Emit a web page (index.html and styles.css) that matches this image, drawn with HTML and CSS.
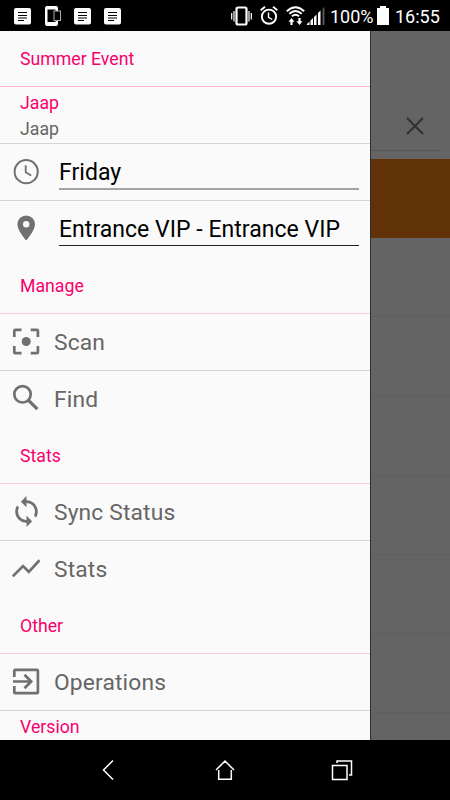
FILE: index.html
```html
<!DOCTYPE html>
<html lang="en">
<head>
    <meta charset="UTF-8">
    <meta name="viewport" content="width=device-width, initial-scale=1.0">
    <title>Summer Event</title>
    <link rel="stylesheet" href="styles.css">
</head>
<body>
    <!-- status bar -->
    <header class="statusbar">
        <div class="notifications">
            <svg class="note" viewBox="0 0 17 17"><rect width="17" height="16.500" rx="2" fill="#fff"/><path d="M4 4.500h9M4 7.500h9M4 10h9M4 12.500h6" stroke="#000" stroke-width="1.200"/></svg>
            <svg class="device" viewBox="0 0 17 20"><path d="M2 0h9a2 2 0 0 1 2 2v3H10.500V3.500H2.500V16h8V14.500H13V18a2 2 0 0 1-2 2H2a2 2 0 0 1-2-2V2a2 2 0 0 1 2-2z" fill="#fff"/><rect x="9" y="5" width="6.500" height="9.500" fill="#000" stroke="#aaa"/></svg>
            <svg class="note" viewBox="0 0 17 17"><rect width="17" height="16.500" rx="2" fill="#fff"/><path d="M4 4.500h9M4 7.500h9M4 10h9M4 12.500h6" stroke="#000" stroke-width="1.200"/></svg>
            <svg class="note" viewBox="0 0 17 17"><rect width="17" height="16.500" rx="2" fill="#fff"/><path d="M4 4.500h9M4 7.500h9M4 10h9M4 12.500h6" stroke="#000" stroke-width="1.200"/></svg>
        </div>
        <div class="system">
            <svg class="vibrate" viewBox="0 0 21 20" fill="none" stroke="#fff"><rect x="5.500" y="1.500" width="10" height="17" rx="1.500" stroke-width="2.200"/><path d="M.7 7v6.500M3 5v10.500M18 5v10.500M20.300 7v6.500" stroke-width="1.200"/></svg>
            <svg class="alarm" viewBox="0 0 18 19" fill="none" stroke="#fff"><circle cx="9" cy="10.700" r="7.100" stroke-width="1.900"/><path d="M.7 4.200L5 .8M17.300 4.200L13 .8" stroke-width="1.900"/><path d="M8.500 6.500v4.800l3.700 2.200" stroke-width="1.400"/></svg>
            <svg class="wifi" viewBox="0 0 19 20" fill="none" stroke="#fff"><path d="M.8 5.200q8.700-8 17.400 0M3.300 7.800q6.200-5.600 12.400 0M6 10.300q3.500-3.200 7 0" stroke-width="1.900"/><path d="M2.500 15.800L5.500 12l3 3.800H6.600V19H4.400v-3.200zM10.500 15.200l3 3.800 3-3.800h-1.900V12h-2.200v3.200z" fill="#fff" stroke="none"/></svg>
            <svg class="signal" viewBox="0 0 18 19"><path d="M0 19v-1l2.500-2.500V19zM3.500 19v-4.500L6 12v7zM7 19v-8l2.500-2.500V19zM11 19V7l2.500-2.500V19z" fill="#fff"/><path d="M15.500 19V3L17.500 1v18z" fill="#555"/></svg>
            <span class="percent">100%</span>
            <svg class="battery" viewBox="0 0 12 19"><path d="M3 0h6v2h3v17H0V2h3z" fill="#fff"/></svg>
            <span class="clock">16:55</span>
        </div>
    </header>

    <main class="screen">
        <!-- drawer -->
        <nav class="drawer">
            <h1 class="title">Summer Event</h1>
            <div class="user">
                <div class="user-name">Jaap</div>
                <div class="user-sub">Jaap</div>
            </div>
            <div class="row">
                <svg class="icon" viewBox="0 0 28 28"><circle cx="14.200" cy="13.700" r="11.600" fill="none" stroke="#707070" stroke-width="2"/><path d="M13.700 7.200v7l5.500 3.400" fill="none" stroke="#707070" stroke-width="1.800"/></svg>
                <div class="field">Friday</div>
            </div>
            <div class="row last">
                <svg class="icon" viewBox="0 0 28 28"><path d="M14.200 1.500A8.800 8.800 0 0 0 5.400 10.300c0 6.500 8.800 16.300 8.800 16.300S23 16.800 23 10.300A8.800 8.800 0 0 0 14.200 1.500zm0 12a3.200 3.200 0 1 1 0-6.400 3.200 3.200 0 0 1 0 6.400z"/></svg>
                <div class="field dark">Entrance VIP - Entrance VIP</div>
            </div>

            <h2 class="group">Manage</h2>
            <div class="row">
                <svg class="icon" viewBox="0 0 28 28"><circle cx="14.200" cy="13.500" r="4.500"/><path d="M2.300 9V2.800a1 1 0 0 1 1-1h6.200M18.700 1.800h6.200a1 1 0 0 1 1 1V9M25.900 18v6.200a1 1 0 0 1-1 1h-6.200M9.500 25.200H3.300a1 1 0 0 1-1-1V18" fill="none" stroke="#707070" stroke-width="2.700"/></svg>
                <span class="label">Scan</span>
            </div>
            <div class="row last">
                <svg class="icon" viewBox="0 0 28 28"><g fill="none" stroke="#707070"><circle cx="10.500" cy="10.300" r="8.200" stroke-width="2.700"/><path d="M16.500 16.300l8.900 8.900" stroke-width="3.200"/></g></svg>
                <span class="label">Find</span>
            </div>

            <h2 class="group">Stats</h2>
            <div class="row">
                <svg class="icon sync" viewBox="1 1 22 22"><path d="M12 4V1L8 5l4 4V6c3.310 0 6 2.690 6 6 0 1.010-.25 1.970-.7 2.800l1.460 1.460C19.540 15.030 20 13.570 20 12c0-4.420-3.580-8-8-8zm0 14c-3.310 0-6-2.690-6-6 0-1.010.25-1.970.7-2.800L5.240 7.740C4.460 8.970 4 10.430 4 12c0 4.420 3.580 8 8 8v3l4-4-4-4v3z"/></svg>
                <span class="label">Sync Status</span>
            </div>
            <div class="row last">
                <svg class="icon" viewBox="0 0 28 28"><path d="M.8 22.300L11 12.100l5.800 5.700L27.500 6.200" fill="none" stroke="#707070" stroke-width="2.700"/></svg>
                <span class="label">Stats</span>
            </div>

            <h2 class="group">Other</h2>
            <div class="row">
                <svg class="icon" viewBox="0 0 28 28"><path d="M2.300 9V2.800a1 1 0 0 1 1-1h21.600a1 1 0 0 1 1 1v21.400a1 1 0 0 1-1 1H3.300a1 1 0 0 1-1-1V18M1 13.500h18M12.500 6.800l6.700 6.700-6.700 6.700" fill="none" stroke="#707070" stroke-width="2.700"/></svg>
                <span class="label">Operations</span>
            </div>
            <div class="version">Version</div>
        </nav>

        <!-- dimmed page behind the drawer -->
        <section class="page">
            <div class="search">
                <svg class="close" viewBox="0 0 18 18"><path d="M1 1l16 16M17 1L1 17" stroke="#333" stroke-width="2.200"/></svg>
            </div>
            <div class="banner"></div>
            <div class="item"></div>
            <div class="item"></div>
            <div class="item"></div>
            <div class="item"></div>
            <div class="item"></div>
            <div class="item"></div>
        </section>
    </main>

    <!-- android buttons -->
    <footer class="navbar">
        <svg class="nav-icon" viewBox="0 0 22 22"><path d="M16 1.500L6.500 11l9.500 9.500"/></svg>
        <svg class="nav-icon" viewBox="0 0 22 22"><path d="M2 11l9-9 9 9M4.700 11v9.300h12.600V11"/></svg>
        <svg class="nav-icon" viewBox="0 0 22 22"><path d="M1.500 6.500h14.500v14H1.500zM6 4V2h14.500v14H18"/></svg>
    </footer>
</body>
</html>
```
FILE: styles.css
```css
* {
    box-sizing: border-box;
}

body {
    margin: 0;
    width: 450px;
    height: 800px;
    overflow: hidden;
    background: #000;
    font-family: Roboto, "Liberation Sans", sans-serif;
    display: flex;
    flex-direction: column;
}

svg {
    display: block;
    flex-shrink: 0;
}

.statusbar {
    height: 31px;
    display: flex;
    justify-content: space-between;
    padding: 0 9px 0 14px;
    color: #fff;
    font-size: 18px;
}

.notifications,
.system {
    display: flex;
    align-items: center;
}

.note {
    width: 17px;
    height: 17px;
    margin: 1px 13px 0 0;
}

.device {
    width: 17px;
    height: 20px;
    margin: 0 12px 0 1px;
}

.vibrate {
    width: 21px;
    height: 20px;
    margin-right: 8px;
}

.alarm {
    width: 18px;
    height: 19px;
    margin-right: 8px;
}

.wifi {
    width: 19px;
    height: 20px;
    margin-right: 2px;
}

.signal {
    width: 18px;
    height: 19px;
    margin-right: 5px;
}

.percent {
    width: 47px;
    line-height: 31px;
    padding-top: 1px;
}

.battery {
    width: 12px;
    height: 19px;
    margin-right: 6px;
}

.clock {
    width: 46px;
    line-height: 31px;
    padding-top: 1px;
}

.screen {
    height: 709px;
    display: flex;
    overflow: hidden;
}

.drawer {
    width: 370px;
    background: #fafafa;
}

.title,
.group,
.version,
.user-name {
    margin: 0;
    color: #f8006d;
    font-size: 17.7px;
    font-weight: 400;
}

.title {
    height: 56px;
    line-height: 56px;
    padding-left: 20px;
    border-bottom: 1px solid #ffb3cb;
}

.user {
    height: 57px;
    padding: 3px 0 0 20px;
    border-bottom: 1px solid #d4d4d4;
    line-height: 26px;
}

.user-sub {
    color: #666;
    font-size: 17.7px;
}

.row {
    height: 57px;
    display: flex;
    align-items: center;
    padding-left: 12px;
    border-bottom: 1px solid #d4d4d4;
}

.row.last {
    height: 56px;
    padding-bottom: 2px;
    border-bottom: 0;
}

.icon {
    width: 28px;
    height: 28px;
    fill: #707070;
}

.sync {
    width: 31px;
    height: 31px;
    margin: -1px -2px 0 -1px;
}

.label {
    margin-left: 14px;
    color: #666;
    font-size: 22.8px;
    letter-spacing: .15px;
}

.last .label {
    padding-top: 2px;
}

.field {
    width: 300px;
    height: 35px;
    margin-left: 19px;
    border-bottom: 2px solid #a4a4a4;
    color: #000;
    font-size: 23px;
    letter-spacing: .03px;
    line-height: 36px;
}

.field.dark {
    border-bottom: 1px solid #222;
    line-height: 37px;
}

.group {
    height: 57px;
    line-height: 58px;
    padding-left: 20px;
    border-bottom: 1px solid #fccbdb;
}

.version {
    line-height: 32px;
    padding-left: 20px;
}

.page {
    width: 80px;
    background: #646464;
    border-left: 1px solid #2b2f30;
}

.search {
    height: 120px;
    margin-right: 10px;
    padding: 86px 0 0 35px;
    border-bottom: 1px solid #575757;
}

.close {
    width: 18px;
    height: 18px;
}

.banner {
    height: 79px;
    margin-top: 8px;
    background: #613108;
}

.item {
    height: 79.2px;
    border-bottom: 1px solid #5f5f5f;
}

.navbar {
    height: 60px;
    display: flex;
    align-items: center;
    justify-content: space-between;
    padding: 0 97px;
}

.nav-icon {
    width: 22px;
    height: 22px;
    fill: none;
    stroke: #fff;
    stroke-width: 1.5;
}
```
